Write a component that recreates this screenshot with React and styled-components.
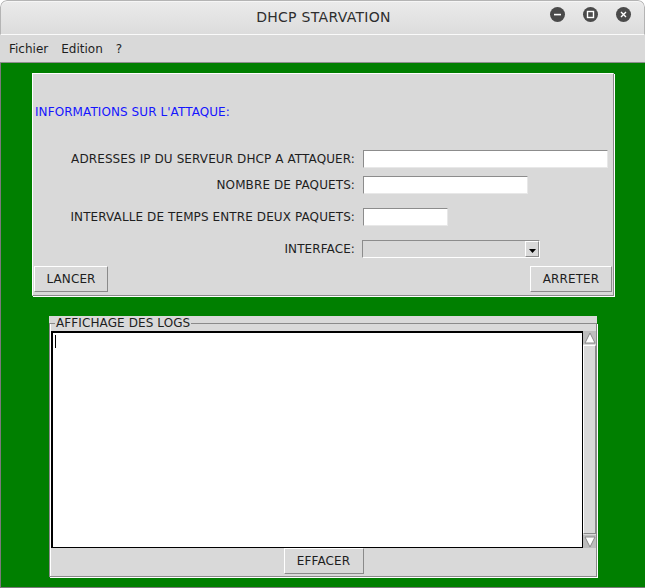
import React from 'react';
import styled, { createGlobalStyle } from 'styled-components';

const GlobalStyle = createGlobalStyle`
  html, body {
    margin: 0;
    padding: 0;
    background: #ffffff;
  }
  body {
    font-family: "DejaVu Sans", "Liberation Sans", sans-serif;
    font-size: 12px;
    color: #1e1e1e;
  }
`;

const Window = styled.div`
  width: 645px;
  height: 588px;
  display: flex;
  flex-direction: column;
  overflow: hidden;
  border-radius: 7px 7px 0 0;
`;

const TitleBar = styled.div`
  flex: none;
  display: flex;
  align-items: center;
  justify-content: center;
  position: relative;
  background: linear-gradient(#ebebeb, #dcdcdc);
  box-shadow: inset 0 1px 0 #f6f6f6;
  border-radius: 7px 7px 0 0;
  border: 1px solid #b4b4b4;
  border-bottom: 1px solid #fafafa;
  box-sizing: border-box;
  height: 35px;
`;

const Title = styled.span`
  font-size: 14px;
  color: #2e2e2e;
  letter-spacing: 0.3px;
  margin-left: 2px;
  margin-top: -1px;
`;

const WindowButtons = styled.div`
  position: absolute;
  right: 13px;
  top: 6px;
  display: flex;
  gap: 18px;
`;

const RoundButton = styled.div`
  width: 15px;
  height: 15px;
  border-radius: 50%;
  background: #4a4a4a;
  display: flex;
  align-items: center;
  justify-content: center;
`;

const MenuBar = styled.div`
  height: 27px;
  flex: none;
  display: flex;
  align-items: center;
  padding-left: 9px;
  gap: 13px;
  background: #d9d9d9;
  border-bottom: 1px solid #8e8e8e;
`;

const MenuItem = styled.span`
  font-size: 12px;
  color: #1e1e1e;
`;

const Desktop = styled.div`
  flex: 1;
  background: #007f00;
  border-left: 1px solid #7a7a7a;
  border-bottom: 1px solid #7a7a7a;
  display: flex;
  flex-direction: column;
  padding-top: 10px;
`;

const FormPanel = styled.div`
  margin-left: 31px;
  width: 578px;
  height: 220px;
  background: #d9d9d9;
  border: 1px solid;
  border-color: #ffffff #8a8a8a #8a8a8a #ffffff;
  box-shadow: 1px 1px 0 #ffffff;
  display: flex;
  flex-direction: column;
  padding: 0 1px 1px 1px;
`;

const SectionTitle = styled.div`
  color: #1515ff;
  font-size: 12px;
  line-height: 14px;
  letter-spacing: 0.08px;
  margin-top: 31px;
  padding-left: 1px;
`;

const FormGrid = styled.div`
  display: grid;
  grid-template-columns: 321px auto;
  column-gap: 8px;
  margin-top: 31px;
  align-items: center;
`;

const Label = styled.label`
  text-align: right;
  font-size: 12px;
  letter-spacing: 0.1px;
  color: #1e1e1e;
  margin-top: ${p => p.$gap || 0}px;
`;

const Field = styled.input`
  box-sizing: border-box;
  width: ${p => p.$w}px;
  height: 18px;
  margin: ${p => p.$gap || 0}px 0 0 0;
  padding: 0 2px;
  background: #ffffff;
  border: 1px solid;
  border-color: #8c8c8c #e8e8e8 #e8e8e8 #8c8c8c;
  outline: none;
  font-family: inherit;
  font-size: 12px;
  justify-self: start;
`;

const Combo = styled.div`
  box-sizing: border-box;
  width: 178px;
  height: 18px;
  margin: ${p => p.$gap || 0}px 0 0 -1px;
  background: #d9d9d9;
  border: 1px solid;
  border-color: #8c8c8c #ffffff #ffffff #8c8c8c;
  display: flex;
  justify-content: flex-end;
  justify-self: start;
`;

const ComboArrow = styled.div`
  width: 14px;
  height: 16px;
  box-sizing: border-box;
  border: 1px solid;
  border-color: #ffffff #8c8c8c #8c8c8c #ffffff;
  display: flex;
  align-items: center;
  justify-content: center;
  padding-top: 3px;
`;

const ButtonRow = styled.div`
  display: flex;
  justify-content: space-between;
  margin-top: 8px;
`;

const Button = styled.button`
  box-sizing: border-box;
  width: ${p => p.$w}px;
  height: 26px;
  padding: 0;
  background: #d9d9d9;
  border: 1px solid;
  border-color: #ffffff #8a8a8a #8a8a8a #ffffff;
  font-family: "DejaVu Sans", "Liberation Sans", sans-serif;
  font-size: 12px;
  letter-spacing: 0.1px;
  color: #1e1e1e;
`;

const LogWrap = styled.div`
  margin-top: 20px;
  margin-left: 48px;
  width: 548px;
  background: #d9d9d9;
`;

const LogBox = styled.fieldset`
  margin: 0;
  padding: 1px 0 2px 1px;
  border: 1px solid #8a8a8a;
  box-shadow: 1px 1px 0 #ffffff, inset 1px 0 0 #ffffff;
  display: flex;
  flex-direction: column;
  align-items: stretch;
  min-width: 0;
`;

const Legend = styled.legend`
  padding: 0 1px 0 1px;
  margin-left: 4px;
  font-size: 12px;
  line-height: 14px;
  letter-spacing: 0.1px;
  color: #1e1e1e;
`;

const ScrollPane = styled.div`
  display: flex;
  height: 217px;
`;

const LogArea = styled.div`
  flex: 1;
  background: #ffffff;
  border: 1px solid #000000;
  box-shadow: inset 1px 1px 0 #000000;
  position: relative;
`;

const Caret = styled.div`
  position: absolute;
  left: 3px;
  top: 3px;
  width: 1px;
  height: 13px;
  background: #000000;
`;

const ScrollBar = styled.div`
  width: 13px;
  flex: none;
  display: flex;
  flex-direction: column;
  background: #d9d9d9;
`;

const ScrollTrack = styled.div`
  flex: 1;
  margin: 1px 0;
  border: 1px solid;
  border-color: #ffffff #8a8a8a #8a8a8a #ffffff;
`;

const ArrowBox = styled.div`
  height: 13px;
  display: flex;
  align-items: center;
  justify-content: center;
  background: #bdbdbd;
`;

const LogFooter = styled.div`
  display: flex;
  justify-content: center;
  margin-top: 0;
`;

function Arrow({ up }) {
  return (
    <ArrowBox>
      <svg width="12" height="12" viewBox="0 0 12 12">
        {up
          ? <polygon points="6,1 11,11 1,11" fill="#ffffff" stroke="#8a8a8a" strokeWidth="1" />
          : <polygon points="1,1 11,1 6,11" fill="#ffffff" stroke="#8a8a8a" strokeWidth="1" />}
      </svg>
    </ArrowBox>
  );
}

function App() {
  return (
    <>
      <GlobalStyle />
      <Window>
        <TitleBar>
          <Title>DHCP STARVATION</Title>
          <WindowButtons>
            <RoundButton>
              <svg width="9" height="9" viewBox="0 0 9 9">
                <rect x="1" y="3.8" width="7" height="1.6" fill="#fff" />
              </svg>
            </RoundButton>
            <RoundButton>
              <svg width="9" height="9" viewBox="0 0 9 9">
                <rect x="1.5" y="1.5" width="6" height="6" fill="none" stroke="#fff" strokeWidth="1.4" />
              </svg>
            </RoundButton>
            <RoundButton>
              <svg width="9" height="9" viewBox="0 0 9 9">
                <path d="M2 2 L7 7 M7 2 L2 7" stroke="#fff" strokeWidth="1.4" />
              </svg>
            </RoundButton>
          </WindowButtons>
        </TitleBar>
        <MenuBar>
          <MenuItem>Fichier</MenuItem>
          <MenuItem>Edition</MenuItem>
          <MenuItem>?</MenuItem>
        </MenuBar>
        <Desktop>
          <FormPanel>
            <SectionTitle>INFORMATIONS SUR L'ATTAQUE:</SectionTitle>
            <FormGrid>
              <Label>ADRESSES IP DU SERVEUR DHCP A ATTAQUER:</Label>
              <Field $w={245} />
              <Label $gap={8}>NOMBRE DE PAQUETS:</Label>
              <Field $w={165} $gap={8} />
              <Label $gap={14}>INTERVALLE DE TEMPS ENTRE DEUX PAQUETS:</Label>
              <Field $w={85} $gap={14} />
              <Label $gap={14}>INTERFACE:</Label>
              <Combo $gap={14}>
                <ComboArrow>
                  <svg width="7" height="4" viewBox="0 0 7 4">
                    <polygon points="0,0 7,0 3.5,4" fill="#000" />
                  </svg>
                </ComboArrow>
              </Combo>
            </FormGrid>
            <ButtonRow>
              <Button $w={74}>LANCER</Button>
              <Button $w={82}>ARRETER</Button>
            </ButtonRow>
          </FormPanel>
          <LogWrap>
            <LogBox>
              <Legend>AFFICHAGE DES LOGS</Legend>
              <ScrollPane>
                <LogArea>
                  <Caret />
                </LogArea>
                <ScrollBar>
                  <Arrow up />
                  <ScrollTrack />
                  <Arrow />
                </ScrollBar>
              </ScrollPane>
              <LogFooter>
                <Button $w={80}>EFFACER</Button>
              </LogFooter>
            </LogBox>
          </LogWrap>
        </Desktop>
      </Window>
    </>
  );
}

export default App;
